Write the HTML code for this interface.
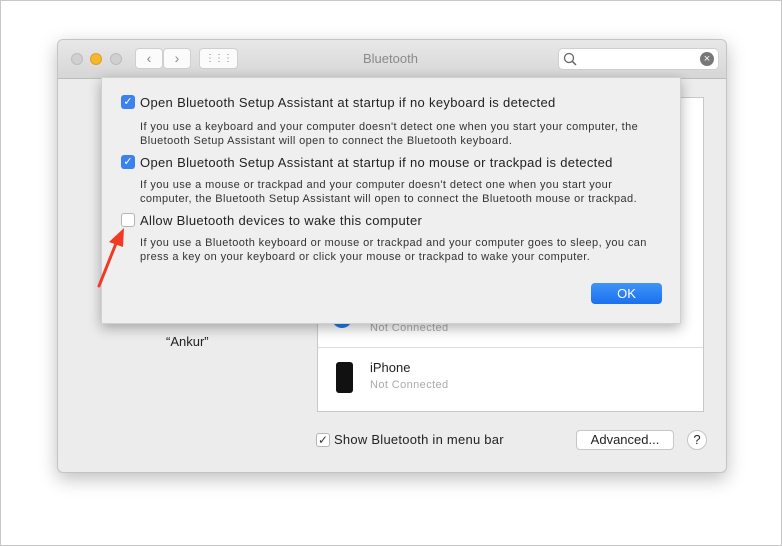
<!DOCTYPE html>
<html><head><style>
body{margin:0;width:782px;height:546px;background:#fff;position:relative;overflow:hidden;font-family:"Liberation Sans",sans-serif;color:#222}
.frame{position:absolute;left:0;top:0;width:780px;height:544px;border:1px solid #c8c8c8}
.win{position:absolute;left:57px;top:39px;width:668px;height:432px;border-radius:6px;background:#ececec;border:1px solid #c4c4c4;box-shadow:0 6px 18px rgba(0,0,0,.25);overflow:hidden}
.tb{position:absolute;left:0;top:0;width:668px;height:38px;background:linear-gradient(#e8e8e8,#d6d6d6);border-bottom:1px solid #bdbdbd}
.dot{position:absolute;top:13px;width:12px;height:12px;border-radius:50%;background:#d0d0d0;border:1px solid #bcbcbc;box-sizing:border-box}
.btn{position:absolute;top:8px;height:21px;background:#fbfbfb;border:1px solid #cfcfcf;border-radius:4px;box-sizing:border-box;color:#888;text-align:center;font-size:14px;line-height:19px}
.sheet{position:absolute;left:101px;top:77px;width:580px;height:247px;background:#efefef;box-shadow:0 4px 12px rgba(0,0,0,.3);border:1px solid #d0d0d0;box-sizing:border-box}
.cb{position:absolute;width:14px;height:14px;border-radius:3px;box-sizing:border-box}
.on{background:#3b82f0;color:#fff;font-size:11px;line-height:14px;text-align:center}
.off{background:#fff;border:1px solid #b5b5b5}
.h{position:absolute;font-size:13px;color:#222;letter-spacing:.33px;white-space:nowrap}
.d{position:absolute;font-size:11px;line-height:14px;color:#333;letter-spacing:.4px;white-space:nowrap}
.list{position:absolute;left:317px;top:97px;width:387px;height:315px;background:#fff;border:1px solid #c8c8c8;box-sizing:border-box}
</style></head><body>
<div class="frame"></div>
<div class="win">
 <div class="tb">
  <div class="dot" style="left:13px"></div>
  <div class="dot" style="left:32px;background:#f5b72e;border-color:#dba123"></div>
  <div class="dot" style="left:52px"></div>
  <div class="btn" style="left:77px;width:28px">‹</div>
  <div class="btn" style="left:105px;width:28px">›</div>
  <div class="btn" style="left:141px;width:39px;font-size:10px;letter-spacing:-1px">⋮⋮⋮</div>
  <div style="position:absolute;left:305px;top:11px;font-size:13px;color:#8a8a8a">Bluetooth</div>
  <div style="position:absolute;left:500px;top:8px;width:161px;height:22px;background:#fff;border:1px solid #cfcfcf;border-radius:5px;box-sizing:border-box">
   <svg style="position:absolute;left:4px;top:3px" width="14" height="14"><circle cx="6" cy="6" r="4.5" fill="none" stroke="#666" stroke-width="1.3"/><line x1="9.3" y1="9.3" x2="13" y2="13" stroke="#666" stroke-width="1.5"/></svg>
   <div style="position:absolute;right:4px;top:3px;width:14px;height:14px;border-radius:50%;background:#777;color:#fff;font-size:11px;line-height:14px;text-align:center">×</div>
  </div>
 </div>
 <div style="position:absolute;left:108px;top:294px;font-size:13px">“Ankur”</div>
</div>
<div class="list">
 <div style="position:absolute;left:0;top:249px;width:385px;border-top:1px solid #ddd"></div>
 <div style="position:absolute;left:14px;top:216px;width:20px;height:14px;border-radius:0 0 10px 10px;background:#1e7cf2"></div>
 <div style="position:absolute;left:52px;top:224px;font-size:11px;color:#aaa;letter-spacing:.4px">Not Connected</div>
 <div style="position:absolute;left:18px;top:264px;width:17px;height:31px;background:#111;border-radius:3px"></div>
 <div style="position:absolute;left:52px;top:262px;font-size:13px">iPhone</div>
 <div style="position:absolute;left:52px;top:281px;font-size:11px;color:#aaa;letter-spacing:.4px">Not Connected</div>
</div>
<div class="cb off" style="left:316px;top:433px;color:#333;font-size:12px;line-height:12px;text-align:center">✓</div>
<div class="h" style="left:334px;top:432px;letter-spacing:.25px">Show Bluetooth in menu bar</div>
<div style="position:absolute;left:576px;top:430px;width:98px;height:20px;background:#fff;border:1px solid #c6c6c6;border-radius:4px;box-sizing:border-box;font-size:13px;text-align:center;line-height:18px">Advanced...</div>
<div style="position:absolute;left:687px;top:430px;width:20px;height:20px;border-radius:50%;background:#fff;border:1px solid #c6c6c6;box-sizing:border-box;font-size:13px;text-align:center;line-height:18px">?</div>
<div class="sheet">
 <div class="cb on" style="left:19px;top:17px">✓</div>
 <div class="h" style="left:38px;top:17px">Open Bluetooth Setup Assistant at startup if no keyboard is detected</div>
 <div class="d" style="left:38px;top:42px">If you use a keyboard and your computer doesn't detect one when you start your computer, the<br>Bluetooth Setup Assistant will open to connect the Bluetooth keyboard.</div>
 <div class="cb on" style="left:19px;top:77px">✓</div>
 <div class="h" style="left:38px;top:77px">Open Bluetooth Setup Assistant at startup if no mouse or trackpad is detected</div>
 <div class="d" style="left:38px;top:100px">If you use a mouse or trackpad and your computer doesn't detect one when you start your<br>computer, the Bluetooth Setup Assistant will open to connect the Bluetooth mouse or trackpad.</div>
 <div class="cb off" style="left:19px;top:135px"></div>
 <div class="h" style="left:38px;top:135px">Allow Bluetooth devices to wake this computer</div>
 <div class="d" style="left:38px;top:158px">If you use a Bluetooth keyboard or mouse or trackpad and your computer goes to sleep, you can<br>press a key on your keyboard or click your mouse or trackpad to wake your computer.</div>
 <div style="position:absolute;left:489px;top:205px;width:71px;height:21px;background:linear-gradient(#3f95f8,#1b70ee);border-radius:4px;color:#fff;font-size:13px;text-align:center;line-height:21px">OK</div>
</div>
<svg style="position:absolute;left:95px;top:225px" width="40" height="65"><line x1="4" y1="61" x2="22" y2="16" stroke="#f03a24" stroke-width="3" stroke-linecap="round"/><polygon points="29,3 14,17 28,22" fill="#f03a24"/></svg>
</body></html>
